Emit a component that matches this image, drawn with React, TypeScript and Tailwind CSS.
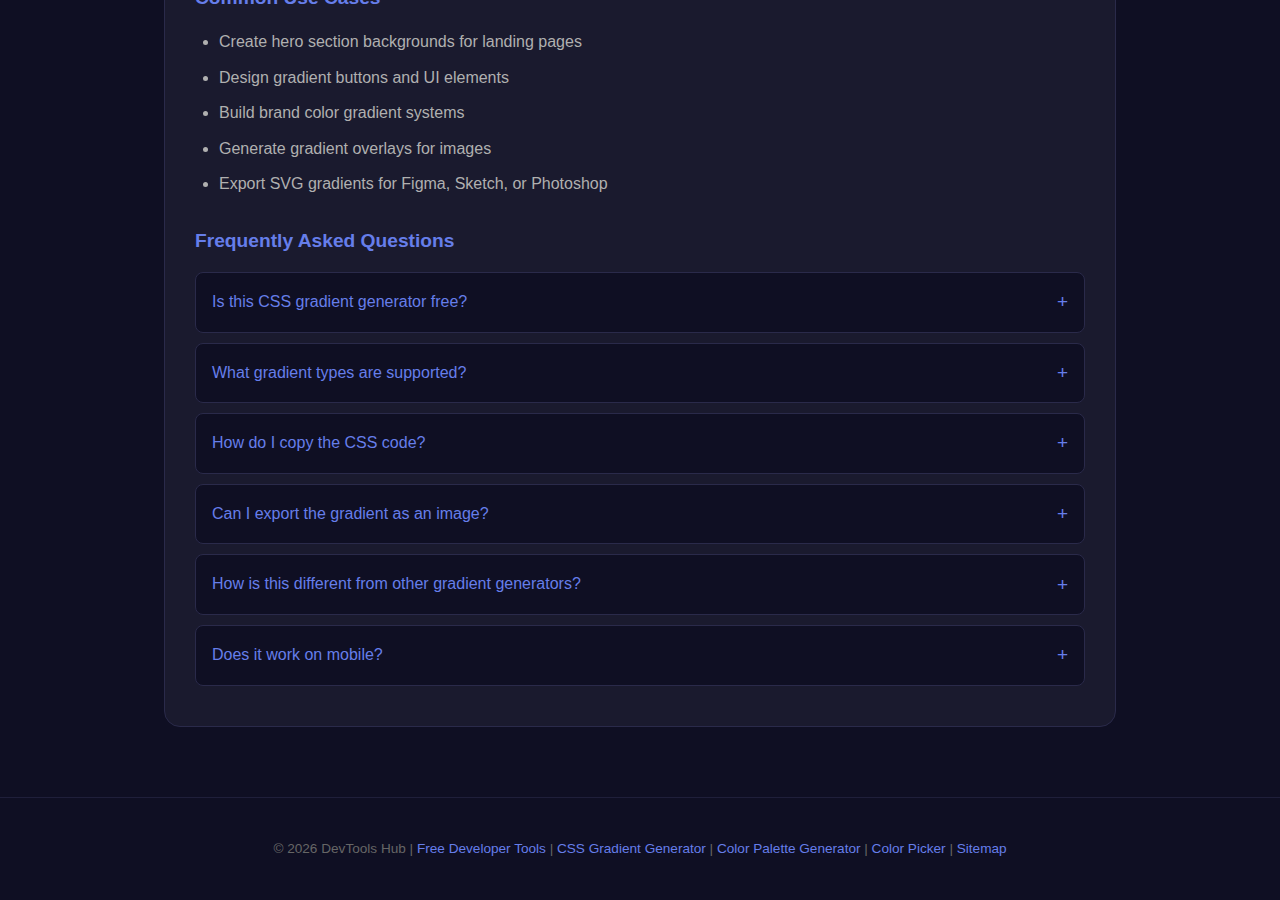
const useCases = [
  'Create hero section backgrounds for landing pages',
  'Design gradient buttons and UI elements',
  'Build brand color gradient systems',
  'Generate gradient overlays for images',
  'Export SVG gradients for Figma, Sketch, or Photoshop',
];

const faqs = [
  'Is this CSS gradient generator free?',
  'What gradient types are supported?',
  'How do I copy the CSS code?',
  'Can I export the gradient as an image?',
  'How is this different from other gradient generators?',
  'Does it work on mobile?',
];

const footerLinks = [
  'Free Developer Tools',
  'CSS Gradient Generator',
  'Color Palette Generator',
  'Color Picker',
  'Sitemap',
];

const FaqItem = ({ question }: { question: string }) => (
  <div className="mb-[10px] rounded-lg border border-[#2a2a4a] bg-[#0f0f23]">
    <button className="flex w-full items-center justify-between px-4 py-[20px] text-left text-[16px] leading-[18.6px] text-[#667eea]">
      <span>{question}</span>
      <span className="text-[19px] leading-[18px]">+</span>
    </button>
  </div>
);

export default function App() {
  return (
    <div className="min-h-screen overflow-hidden bg-[#0f0f23] font-['Liberation_Sans',Arial,sans-serif]">
      <main className="mx-auto -mt-[45px] mb-[40px] w-[952px] rounded-2xl border border-[#2a2a4a] bg-[#1a1a2e] px-[30px] pt-[30px] pb-[30px]">
        <h2 className="mb-[20px] text-[19.2px] leading-[23px] font-bold text-[#667eea]">
          Common Use Cases
        </h2>
        <ul className="list-disc pl-[24px] text-[16px] leading-[1.6] text-[#b0b0b0]">
          {useCases.map((item) => (
            <li key={item} className="mb-[10px]">
              {item}
            </li>
          ))}
        </ul>

        <h2 className="mt-[32px] mb-[20px] text-[19.2px] leading-[23px] font-bold text-[#667eea]">
          Frequently Asked Questions
        </h2>
        <div>
          {faqs.map((q) => (
            <FaqItem key={q} question={q} />
          ))}
        </div>
      </main>

      <footer className="mt-[70px] border-t border-[#1f1f3a] pt-[41px] pb-[40px] text-center text-[13.6px] leading-[1.5] text-[#666]">
        © 2026 DevTools Hub
        {footerLinks.map((link) => (
          <span key={link}>
            {' | '}
            <a href="#" className="text-[#667eea]">
              {link}
            </a>
          </span>
        ))}
      </footer>
    </div>
  );
}
